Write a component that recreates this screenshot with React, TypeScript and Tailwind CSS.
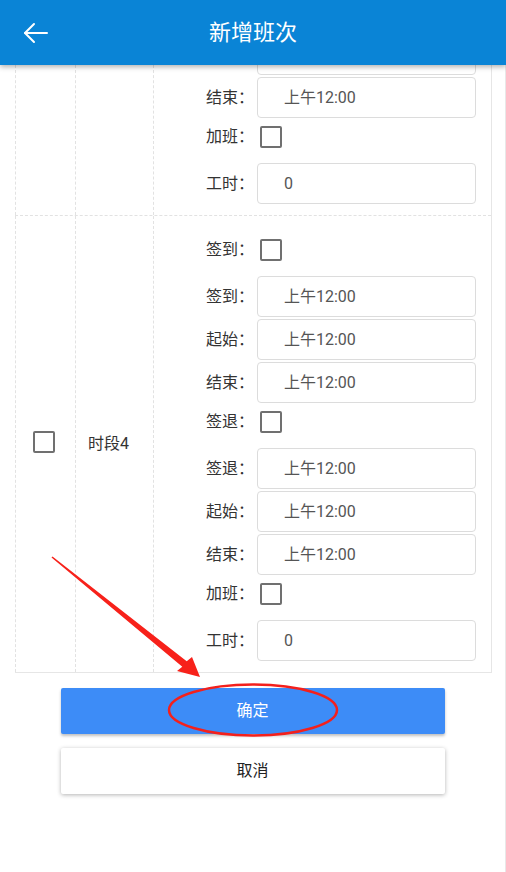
import { ReactNode } from 'react';

type Item =
  | { kind: 'check'; label: string }
  | { kind: 'input'; label: string; value: string };

const firstRow: Item[] = [
  { kind: 'input', label: '起始：', value: '上午12:00' },
  { kind: 'input', label: '结束：', value: '上午12:00' },
  { kind: 'check', label: '加班：' },
  { kind: 'input', label: '工时：', value: '0' },
];

const secondRow: Item[] = [
  { kind: 'check', label: '签到：' },
  { kind: 'input', label: '签到：', value: '上午12:00' },
  { kind: 'input', label: '起始：', value: '上午12:00' },
  { kind: 'input', label: '结束：', value: '上午12:00' },
  { kind: 'check', label: '签退：' },
  { kind: 'input', label: '签退：', value: '上午12:00' },
  { kind: 'input', label: '起始：', value: '上午12:00' },
  { kind: 'input', label: '结束：', value: '上午12:00' },
  { kind: 'check', label: '加班：' },
  { kind: 'input', label: '工时：', value: '0' },
];

function CheckBox() {
  return <div className="w-[22px] h-[22px] rounded-[2px] border-2 border-[#707070] bg-white" />;
}

function Field({ item }: { item: Item }) {
  if (item.kind === 'check') {
    return (
      <div className="h-[43px] pt-[6px]">
        <div className="flex items-center h-[22px]">
          <span className="w-[100px] text-right text-[16px] text-[#333]">{item.label}</span>
          <div className="ml-[6px]">
            <CheckBox />
          </div>
        </div>
      </div>
    );
  }
  return (
    <div className="h-[43px] flex items-start">
      <span className="w-[100px] text-right text-[16px] leading-[41px] text-[#333]">{item.label}</span>
      <div className="ml-[3px] w-[219px] h-[41px] rounded-[4px] border border-[#dcdcdc] pl-[26px] text-[16px] leading-[39px] text-[#555]">
        {item.value}
      </div>
    </div>
  );
}

function Row({ children, name, first }: { children: ReactNode; name?: string; first?: boolean }) {
  return (
    <div className={first ? 'flex h-[151px] border-b border-dashed border-[#e2e2e2]' : 'flex h-[456px]'}>
      <div className="w-[61px] shrink-0 border-l border-r border-dashed border-[#e2e2e2] flex items-center justify-center pb-[5px] pr-[4px]">
        {name && <CheckBox />}
      </div>
      <div className="w-[78px] shrink-0 border-r border-dashed border-[#e2e2e2] flex items-center pl-[12px] text-[16px] text-[#333]">
        {name}
      </div>
      <div className="flex-1 overflow-hidden">{children}</div>
    </div>
  );
}

export default function App() {
  return (
    <div
      className="relative w-[506px] h-[872px] bg-white overflow-hidden"
      style={{ fontFamily: 'Roboto, "Noto Sans CJK SC", sans-serif' }}
    >
      <header className="relative z-10 h-[65px] bg-[#0a84d6] shadow-[0_2px_5px_rgba(0,0,0,0.3)] grid grid-cols-[70px_1fr_70px] items-center">
        <div className="pl-[23px]">
          <svg width="26" height="24" viewBox="0 0 26 24" fill="none" stroke="white" strokeWidth="2" strokeLinecap="round" strokeLinejoin="round">
            <path d="M2 12H24" />
            <path d="M11 3 2 12l9 9" />
          </svg>
        </div>
        <h1 className="text-center text-[22px] text-white font-normal">新增班次</h1>
        <div />
      </header>

      <main className="h-[807px] border-r border-[#e8e8e8]">
        <div className="ml-[15px] w-[477px] border-r border-b border-[#e6e6e6]">
          <Row first>
            <div className="-mt-[31px] pb-[9px]">
              {firstRow.map((item, i) => (
                <Field key={i} item={item} />
              ))}
            </div>
          </Row>
          <Row name="时段4">
            <div className="pt-[17px] pb-[9px]">
              {secondRow.map((item, i) => (
                <Field key={i} item={item} />
              ))}
            </div>
          </Row>
        </div>

        <button className="block mt-[15px] mx-auto w-[384px] h-[46px] rounded-[2px] bg-[#3d8cf7] text-white text-[16px] shadow-[0_2px_3px_rgba(0,0,0,0.25)]">
          确定
        </button>
        <button className="block mt-[14px] mx-auto w-[384px] h-[46px] rounded-[2px] bg-white text-[#222] text-[16px] shadow-[0_1px_4px_rgba(0,0,0,0.3)]">
          取消
        </button>
      </main>

      <svg className="absolute inset-0 z-20 pointer-events-none" width="506" height="872" viewBox="0 0 506 872">
        <polygon
          points="52.5,556.4 186.7,661.3 192,657 200,677 177,671 182.3,666.7 51.5,557.6"
          fill="#f7211a"
        />
        <ellipse cx="253" cy="710" rx="84" ry="25.5" fill="none" stroke="#f4201c" strokeWidth="2.5" />
      </svg>
    </div>
  );
}
